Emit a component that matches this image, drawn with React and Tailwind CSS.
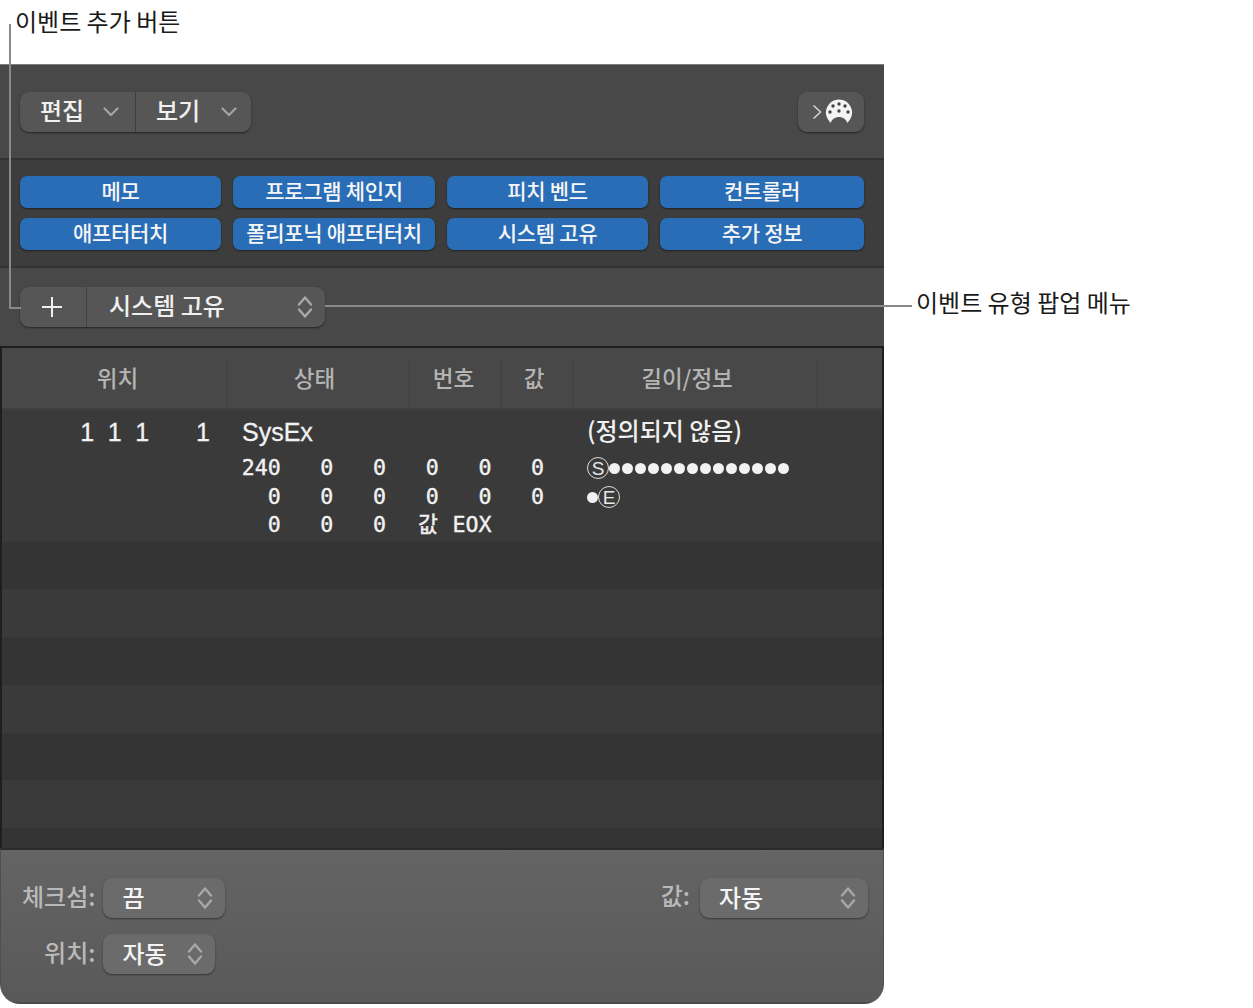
const kr = "font-['Noto_Sans_CJK_KR','Noto_Sans',sans-serif]";

const eventButtons = [
  "메모",
  "프로그램 체인지",
  "피치 벤드",
  "컨트롤러",
  "애프터터치",
  "폴리포닉 애프터터치",
  "시스템 고유",
  "추가 정보",
];

const columns = [
  { label: "위치", width: "w-[226px]", shift: "pl-[6px]" },
  { label: "상태", width: "w-[182px]", shift: "pr-[8px]" },
  { label: "번호", width: "w-[92px]", shift: "pr-[4px]" },
  { label: "값", width: "w-[71px]", shift: "pr-[6px]" },
  { label: "길이/정보", width: "w-[245px]", shift: "pr-[16px]" },
  { label: "", width: "flex-1" },
];

const sysexRows = [
  ["240", "0", "0", "0", "0", "0"],
  ["0", "0", "0", "0", "0", "0"],
  ["0", "0", "0", "값", "EOX", ""],
];

function Chevron({ className = "" }) {
  return (
    <svg width="16" height="10" viewBox="0 0 16 10" className={className}>
      <path d="M1.5 1.5 8 8l6.5-6.5" fill="none" stroke="#a4a4a4" strokeWidth="2.2" strokeLinecap="round" strokeLinejoin="round" />
    </svg>
  );
}

function UpDown({ color = "#a8a8a8" }) {
  return (
    <svg width="16" height="24" viewBox="0 0 16 24" className="shrink-0">
      <path d="M2 9.5 8 2.5l6 7M2 14.5l6 7 6-7" fill="none" stroke={color} strokeWidth="2.4" strokeLinecap="round" strokeLinejoin="round" />
    </svg>
  );
}

function MidiIcon() {
  return (
    <svg width="28" height="26" viewBox="0 0 28 26">
      <path d="M14 0.5a13 13 0 0 1 11 20l-2.6 3.4c-1.4-4-4.8-6-8.4-6s-7 2-8.4 6L3 20.5A13 13 0 0 1 14 0.5Z" fill="#f4f4f4" />
      <circle cx="14" cy="5" r="1.7" fill="#444" />
      <circle cx="8" cy="7" r="1.7" fill="#444" />
      <circle cx="20" cy="7" r="1.7" fill="#444" />
      <circle cx="5" cy="13" r="1.7" fill="#444" />
      <circle cx="23" cy="13" r="1.7" fill="#444" />
      <circle cx="14" cy="12" r="1.7" fill="#444" />
    </svg>
  );
}

function Dots({ count }) {
  return (
    <div className="flex gap-[2px]">
      {Array.from({ length: count }).map((_, i) => (
        <span key={i} className="w-[11px] h-[11px] rounded-full bg-[#f2f2f2]" />
      ))}
    </div>
  );
}

function Marker({ letter }) {
  return (
    <span className="flex items-center justify-center w-[22px] h-[22px] rounded-full border border-[#dcdcdc] text-[#e8e8e8] text-[19px] leading-none font-['Liberation_Sans',sans-serif]">
      {letter}
    </span>
  );
}

function Select({ value, width, textPad = "pl-[19px]", arrowPad = "pr-[12px]" }) {
  return (
    <div className={`flex items-center justify-between h-10 rounded-[9px] bg-[#6b6b6b] shadow-[0_1px_2px_rgba(0,0,0,0.45)] ${width} ${textPad} ${arrowPad}`}>
      <span className="text-[24px] font-medium leading-none text-[#f4f4f4] -mt-[3px]">{value}</span>
      <UpDown />
    </div>
  );
}

export default function App() {
  return (
    <div className={`relative w-[1253px] h-[1008px] bg-white overflow-hidden pt-[64px] ${kr}`}>
      {/* callouts */}
      <span className="absolute left-[15px] top-[3px] text-[24px] leading-[36px] text-[#1a1a1a]">이벤트 추가 버튼</span>
      <span className="absolute left-[916px] top-[284px] text-[24px] leading-[36px] text-[#1a1a1a]">이벤트 유형 팝업 메뉴</span>

      <div className="w-[884px] h-[940px] flex flex-col rounded-b-[20px] overflow-hidden border-t border-[#7d7d7d]">
        {/* toolbar */}
        <div className="h-[93px] shrink-0 bg-[#484848] flex items-center justify-between pl-5 pr-5">
          <div className="flex h-10 rounded-[9px] bg-[#565656] shadow-[0_1px_2px_rgba(0,0,0,0.5)] text-[#f0f0f0]">
            <div className="w-[116px] flex items-center pl-5 gap-[19px] border-r border-[#3f3f3f]">
              <span className="text-[24px] font-medium leading-none -mt-[4px]">편집</span>
              <Chevron />
            </div>
            <div className="w-[115px] flex items-center pl-5 gap-[21px]">
              <span className="text-[24px] font-medium leading-none -mt-[4px]">보기</span>
              <Chevron />
            </div>
          </div>
          <div className="w-[66px] h-10 rounded-[9px] bg-[#565656] shadow-[0_1px_2px_rgba(0,0,0,0.5)] flex items-center pl-[14px] gap-[3px]">
            <svg width="10" height="16" viewBox="0 0 10 16">
              <path d="M1.5 1.5 8.5 8l-7 6.5" fill="none" stroke="#d8d8d8" strokeWidth="1.5" />
            </svg>
            <MidiIcon />
          </div>
        </div>

        {/* event buttons */}
        <div className="h-[110px] shrink-0 bg-[#3d3d3d] border-y-2 border-[#333333] px-5 pt-4">
          <div className="grid grid-cols-[201px_202px_201px_204px] gap-x-3 gap-y-[10px]">
            {eventButtons.map((label) => (
              <div
                key={label}
                className="h-8 rounded-[7px] bg-[#2a6db7] shadow-[0_1px_2px_rgba(0,0,0,0.5)] flex items-center justify-center text-[21px] font-medium leading-none text-[#f6f6f6] tracking-[-0.3px]"
              >
                <span className="-mt-[3px]">{label}</span>
              </div>
            ))}
          </div>
        </div>

        {/* add row */}
        <div className="h-[78px] shrink-0 bg-[#484848] px-5 pt-[19px]">
          <div className="flex w-[305px] h-10 rounded-[9px] bg-[#565656] shadow-[0_1px_2px_rgba(0,0,0,0.5)]">
            <div className="w-[67px] flex items-center justify-center pr-[2px] border-r border-[#424242]">
              <svg width="22" height="22" viewBox="0 0 22 22">
                <path d="M11 1v20M1 11h20" stroke="#f0f0f0" strokeWidth="2" />
              </svg>
            </div>
            <div className="flex-1 flex items-center justify-between pl-[22px] pr-[12px]">
              <span className="text-[24px] font-medium leading-none text-[#f0f0f0] -mt-[4px]">시스템 고유</span>
              <UpDown />
            </div>
          </div>
        </div>

        {/* event list */}
        <div className="h-[502px] shrink-0 flex flex-col border-x-2 border-t-2 border-[#1e1e1e] bg-[#3a3a3a]">
          <div className="h-[62px] shrink-0 flex bg-[#484848] border-b-2 border-[#404040] pt-[12px]">
            {columns.map((col) => (
              <div
                key={col.label || "end"}
                className={`${col.width} ${col.shift || ""} flex justify-center border-r border-[#3f3f3f] last:border-r-0 text-[22.5px] font-medium leading-none text-[#b4b4b4]`}
              >
                <span className="mt-[6px]">{col.label}</span>
              </div>
            ))}
          </div>

          <div className="h-[132px] shrink-0 flex text-[#f2f2f2]">
            <div className="w-[226px] shrink-0 flex justify-end pr-[18px] pt-[6px] text-[25px] leading-[32px] font-['Liberation_Sans',sans-serif] [-webkit-text-stroke:0.3px]">
              <span className="w-[27.5px] text-center">1</span>
              <span className="w-[27.5px] text-center">1</span>
              <span className="w-[27.5px] text-center">1</span>
              <span className="w-[54px] text-right">1</span>
            </div>
            <div className="w-[343px] shrink-0 pt-[6px]">
              <div className="pl-[14px] text-[25px] leading-[32px] font-['Liberation_Sans',sans-serif] [-webkit-text-stroke:0.3px]">SysEx</div>
              <div className="mt-[6px] font-['DejaVu_Sans_Mono','Noto_Sans_CJK_KR',monospace] text-[21.6px] leading-[28.5px] [-webkit-text-stroke:0.4px]">
                {sysexRows.map((row, r) => (
                  <div key={r} className="grid grid-cols-[repeat(6,52.7px)]">
                    {row.map((cell, c) => (
                      <span key={c} className={cell === "값" ? "text-right pr-[1px]" : "text-right"}>{cell}</span>
                    ))}
                  </div>
                ))}
              </div>
            </div>
            <div className="pl-[16px] pt-[5px]">
              <div className="text-[24px] font-medium leading-[32px] text-[#f0f0f0] -mt-[1px]">(정의되지 않음)</div>
              <div className="flex items-center mt-[9px] h-[26px]">
                <Marker letter="S" />
                <Dots count={14} />
              </div>
              <div className="flex items-center mt-[3px] h-[26px]">
                <Dots count={1} />
                <Marker letter="E" />
              </div>
            </div>
          </div>

          <div className="h-[47px] shrink-0 bg-[#343434]" />
          <div className="h-[48px] shrink-0 bg-[#3a3a3a]" />
          <div className="h-[48px] shrink-0 bg-[#343434]" />
          <div className="h-[48px] shrink-0 bg-[#3a3a3a]" />
          <div className="h-[47px] shrink-0 bg-[#343434]" />
          <div className="h-[48px] shrink-0 bg-[#3a3a3a]" />
          <div className="flex-1 bg-[#343434]" />
        </div>

        {/* options */}
        <div className="flex-1 bg-gradient-to-b from-[#646464] to-[#595959] border-t-2 border-[#2b2b2b] border-b-2 border-b-[#4a4a4a] border-x border-x-[#4e4e4e] flex items-start justify-between pl-[21px] pr-[15px] pt-[28px]">
          <div className="grid grid-cols-[auto_auto] justify-start items-center gap-x-[8px] gap-y-4">
            <span className="text-right text-[24px] font-medium leading-none text-[#b9b9b9] -mt-[4px]">체크섬:</span>
            <Select value="끔" width="w-[122px]" arrowPad="pr-[12px]" />
            <span className="text-right text-[24px] font-medium leading-none text-[#b9b9b9] -mt-[4px]">위치:</span>
            <Select value="자동" width="w-[112px]" arrowPad="pr-[12px]" />
          </div>
          <div className="flex items-start gap-[10px]">
            <span className="text-[24px] font-medium leading-[40px] text-[#b9b9b9] -mt-[3px]">값:</span>
            <Select value="자동" width="w-[168px]" />
          </div>
        </div>
      </div>

      {/* leader lines */}
      <div className="absolute left-[9px] top-[24px] w-[2px] h-[284px] bg-[#8a8a8a]" />
      <div className="absolute left-[9px] top-[307px] w-[12px] h-[2px] bg-[#8a8a8a]" />
      <div className="absolute left-[325px] top-[305px] w-[587px] h-[2px] bg-[#8a8a8a]" />
    </div>
  );
}
